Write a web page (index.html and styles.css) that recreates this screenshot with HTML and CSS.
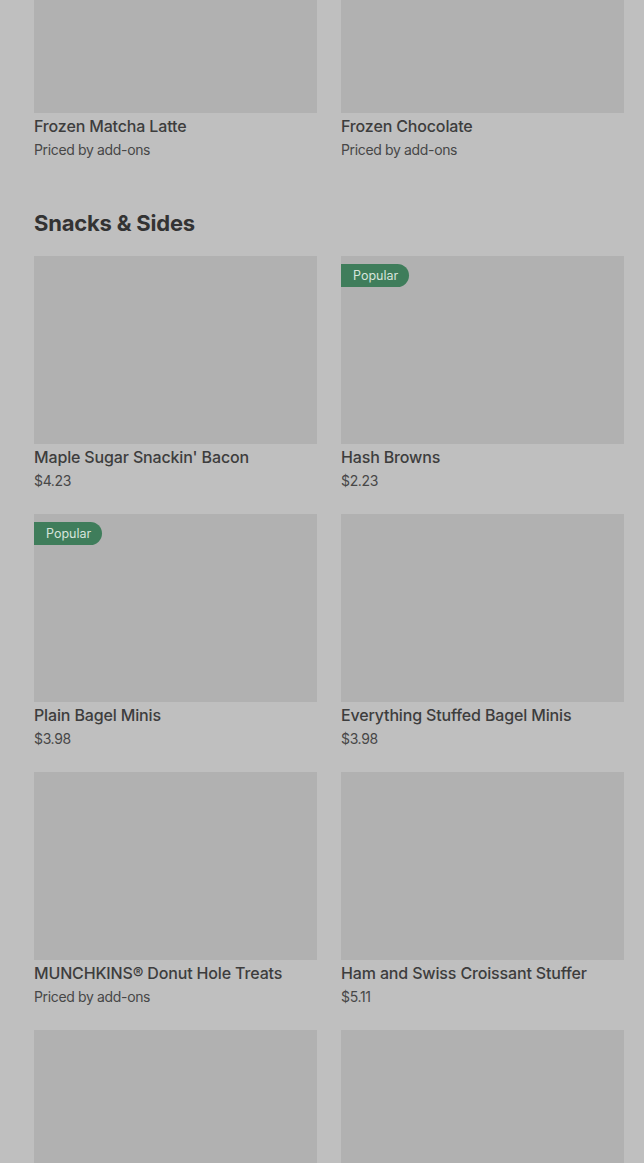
FILE: index.html
```html
<!DOCTYPE html>
<html lang="en">
<head>
    <meta charset="UTF-8">
    <meta name="viewport" content="width=device-width, initial-scale=1.0">
    <title>Menu</title>
    <link rel="stylesheet" href="styles.css">
</head>
<body>
    <div class="menu">
        <section class="section section-scrolled">
            <div class="grid">
                <div class="card">
                    <div class="thumb"></div>
                    <div class="name">Frozen Matcha Latte</div>
                    <div class="price">Priced by add-ons</div>
                </div>
                <div class="card">
                    <div class="thumb"></div>
                    <div class="name">Frozen Chocolate</div>
                    <div class="price">Priced by add-ons</div>
                </div>
            </div>
        </section>

        <section class="section">
            <h2 class="section-title">Snacks &amp; Sides</h2>
            <div class="grid">
                <div class="card">
                    <div class="thumb"></div>
                    <div class="name">Maple Sugar Snackin' Bacon</div>
                    <div class="price">$4.23</div>
                </div>
                <div class="card">
                    <div class="thumb"><span class="badge">Popular</span></div>
                    <div class="name">Hash Browns</div>
                    <div class="price">$2.23</div>
                </div>
                <div class="card">
                    <div class="thumb"><span class="badge">Popular</span></div>
                    <div class="name">Plain Bagel Minis</div>
                    <div class="price">$3.98</div>
                </div>
                <div class="card">
                    <div class="thumb"></div>
                    <div class="name">Everything Stuffed Bagel Minis</div>
                    <div class="price">$3.98</div>
                </div>
                <div class="card">
                    <div class="thumb"></div>
                    <div class="name">MUNCHKINS® Donut Hole Treats</div>
                    <div class="price">Priced by add-ons</div>
                </div>
                <div class="card">
                    <div class="thumb"></div>
                    <div class="name">Ham and Swiss Croissant Stuffer</div>
                    <div class="price">$5.11</div>
                </div>
                <div class="card">
                    <div class="thumb"></div>
                    <div class="name"></div>
                    <div class="price"></div>
                </div>
                <div class="card">
                    <div class="thumb"></div>
                    <div class="name"></div>
                    <div class="price"></div>
                </div>
            </div>
        </section>
    </div>
</body>
</html>
```

FILE: styles.css
```css
html, body {
    height: 100%;
    overflow: hidden;
}
body {
    margin: 0;
    background-color: #bfbfbf;
    font-family: Inter, "Noto Sans", sans-serif;
    color: #3b3b3b;
}
.menu {
    padding: 0 20px 0 34px;
}
.section-scrolled {
    margin-top: -75px;
}
.section-title {
    margin: 47px 0 17px;
    font-size: 22px;
    line-height: 32px;
    font-weight: 700;
    letter-spacing: -0.2px;
    color: #333;
}
.grid {
    display: grid;
    grid-template-columns: 1fr 1fr;
    column-gap: 24px;
    row-gap: 23px;
}
.thumb {
    position: relative;
    height: 188px;
    background-color: #b1b1b1;
}
.name {
    margin-top: 1px;
    min-height: 24px;
    font-size: 16px;
    line-height: 24px;
    font-weight: 500;
    color: #3d3d3d;
    letter-spacing: -0.15px;
}
.price {
    margin-top: 2px;
    min-height: 20px;
    font-size: 14px;
    line-height: 20px;
    color: #474747;
    letter-spacing: -0.35px;
}
.badge {
    position: absolute;
    top: 8px;
    left: 0;
    padding: 0 11px 0 12px;
    height: 23px;
    line-height: 23px;
    font-size: 12.5px;
    color: #d6e4dc;
    background-color: #3f7d5b;
    border-radius: 0 12px 12px 0;
}
```
